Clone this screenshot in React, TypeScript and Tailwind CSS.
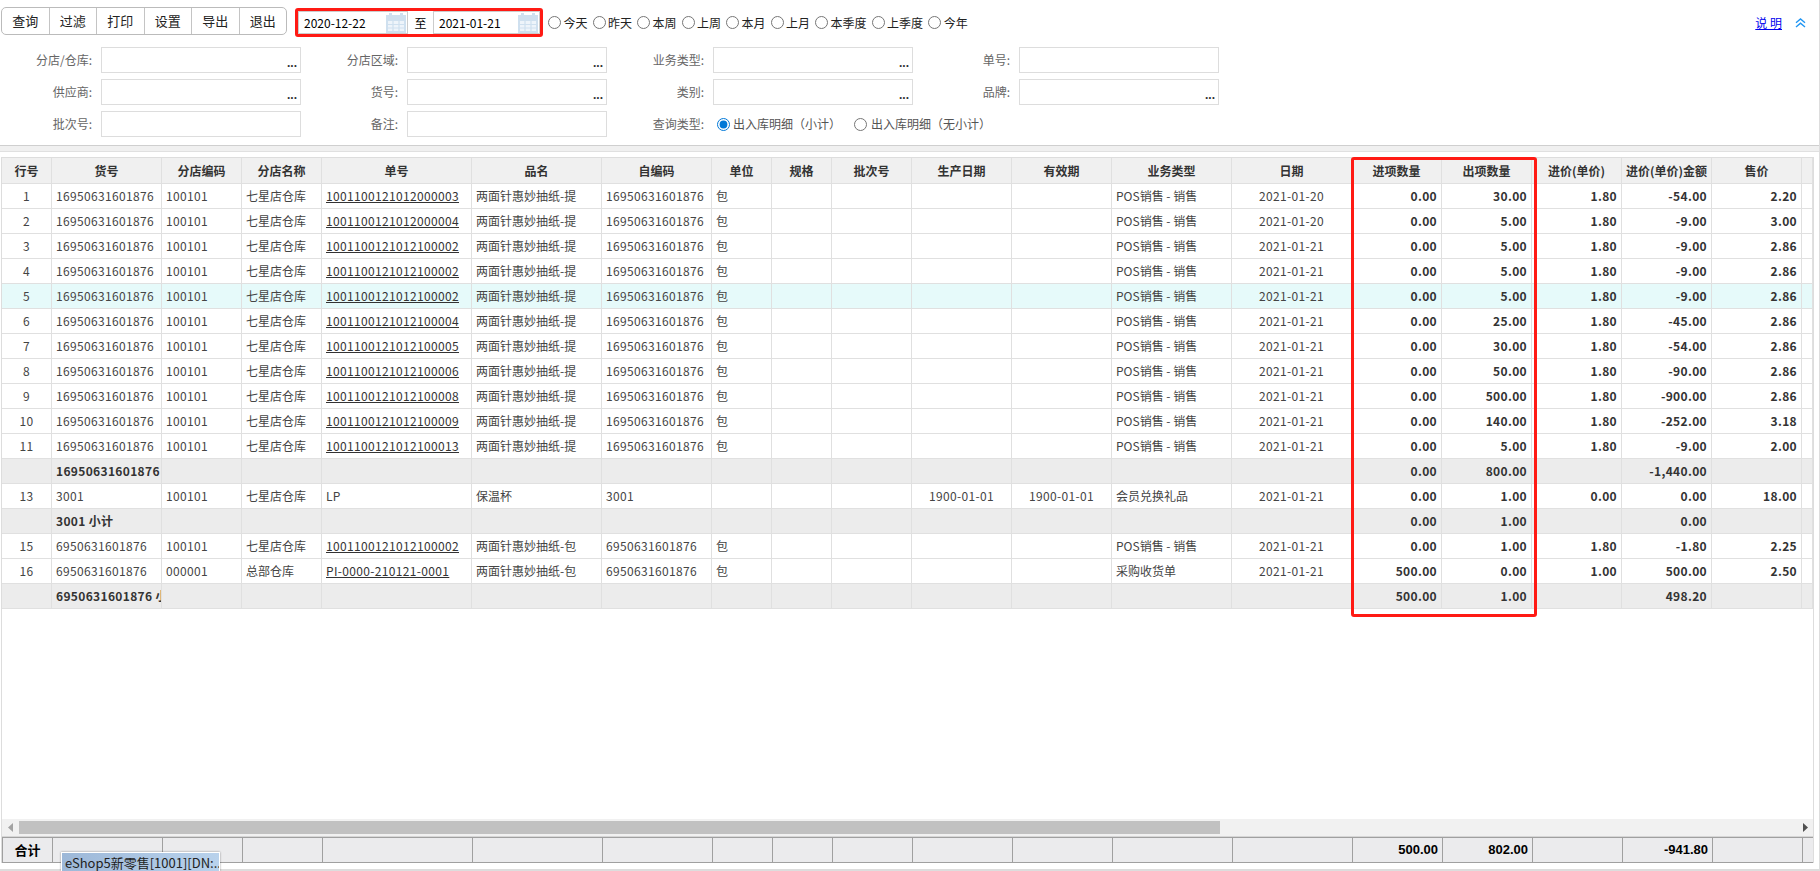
import React from "react";

const colWidths = [
    "w-[50px]", "w-[110px]", "w-[80px]", "w-[80px]", "w-[150px]", "w-[130px]", "w-[110px]", "w-[60px]", "w-[60px]", "w-[80px]",
    "w-[100px]", "w-[100px]", "w-[120px]", "w-[120px]", "w-[90px]", "w-[90px]", "w-[90px]", "w-[90px]", "w-[90px]", "w-[11px]",
];

const headers = ["行号", "货号", "分店编码", "分店名称", "单号", "品名", "自编码", "单位", "规格", "批次号", "生产日期", "有效期", "业务类型", "日期", "进项数量", "出项数量", "进价(单价)", "进价(单价)金额", "售价", ""];

interface Row {
    no?: string;
    code: string;
    shopCode?: string;
    shop?: string;
    bill?: string;
    name?: string;
    self?: string;
    unit?: string;
    made?: string;
    expire?: string;
    biz?: string;
    date?: string;
    inQty: string;
    outQty: string;
    price?: string;
    amount: string;
    sale?: string;
    subtotal?: boolean;
    active?: boolean;
}

const paper = (no: string, bill: string, date: string, outQty: string, amount: string, sale: string, active?: boolean): Row => ({
    no, code: "16950631601876", shopCode: "100101", shop: "七星店仓库", bill, name: "两面针惠妙抽纸-提", self: "16950631601876", unit: "包",
    biz: "POS销售 - 销售", date, inQty: "0.00", outQty, price: "1.80", amount, sale, active,
});

const rows: Row[] = [
    paper("1", "1001100121012000003", "2021-01-20", "30.00", "-54.00", "2.20"),
    paper("2", "1001100121012000004", "2021-01-20", "5.00", "-9.00", "3.00"),
    paper("3", "1001100121012100002", "2021-01-21", "5.00", "-9.00", "2.86"),
    paper("4", "1001100121012100002", "2021-01-21", "5.00", "-9.00", "2.86"),
    paper("5", "1001100121012100002", "2021-01-21", "5.00", "-9.00", "2.86", true),
    paper("6", "1001100121012100004", "2021-01-21", "25.00", "-45.00", "2.86"),
    paper("7", "1001100121012100005", "2021-01-21", "30.00", "-54.00", "2.86"),
    paper("8", "1001100121012100006", "2021-01-21", "50.00", "-90.00", "2.86"),
    paper("9", "1001100121012100008", "2021-01-21", "500.00", "-900.00", "2.86"),
    paper("10", "1001100121012100009", "2021-01-21", "140.00", "-252.00", "3.18"),
    paper("11", "1001100121012100013", "2021-01-21", "5.00", "-9.00", "2.00"),
    { code: "16950631601876 小计", inQty: "0.00", outQty: "800.00", amount: "-1,440.00", subtotal: true },
    { no: "13", code: "3001", shopCode: "100101", shop: "七星店仓库", bill: "LP", name: "保温杯", self: "3001", made: "1900-01-01", expire: "1900-01-01", biz: "会员兑换礼品", date: "2021-01-21", inQty: "0.00", outQty: "1.00", price: "0.00", amount: "0.00", sale: "18.00" },
    { code: "3001 小计", inQty: "0.00", outQty: "1.00", amount: "0.00", subtotal: true },
    { no: "15", code: "6950631601876", shopCode: "100101", shop: "七星店仓库", bill: "1001100121012100002", name: "两面针惠妙抽纸-包", self: "6950631601876", unit: "包", biz: "POS销售 - 销售", date: "2021-01-21", inQty: "0.00", outQty: "1.00", price: "1.80", amount: "-1.80", sale: "2.25" },
    { no: "16", code: "6950631601876", shopCode: "000001", shop: "总部仓库", bill: "PI-0000-210121-0001", name: "两面针惠妙抽纸-包", self: "6950631601876", unit: "包", biz: "采购收货单", date: "2021-01-21", inQty: "500.00", outQty: "0.00", price: "1.00", amount: "500.00", sale: "2.50" },
    { code: "6950631601876 小计", inQty: "500.00", outQty: "1.00", amount: "498.20", subtotal: true },
];

const cell = "border-r border-b border-[#e0e0e0] px-[4px] overflow-hidden whitespace-nowrap";
const num = "tracking-[0.34px]";
const right = "text-right tracking-[0.34px]";

const CalendarIcon = () => (
    <svg width="20" height="20" viewBox="0 0 20 20" className="shrink-0">
        <rect x="0" y="2" width="20" height="18" fill="#cfe0ef" />
        <rect x="3" y="0" width="3" height="4" fill="#cfe0ef" />
        <rect x="14" y="0" width="3" height="4" fill="#cfe0ef" />
        <rect x="2" y="8" width="16" height="10" fill="#eef4fa" />
        <path d="M7 8v10M13 8v10M2 11.5h16M2 15h16" stroke="#cfe0ef" strokeWidth="1.2" />
    </svg>
);

const DateBox = ({ value, className }: { value: string; className: string }) => (
    <div className={`flex h-full items-center justify-between border border-[#cccccc] bg-white pl-[5px] pr-[1px] text-black ${className}`}>
        <span>{value}</span>
        <CalendarIcon />
    </div>
);

const Radio = ({ label }: { label: string }) => (
    <label className="flex items-center gap-[2.5px]">
        <input type="radio" name="range" className="m-0 h-[13px] w-[13px]" />
        <span>{label}</span>
    </label>
);

const Field = ({ label, dots, wide }: { label: string; dots?: boolean; wide?: boolean }) => (
    <div className="flex items-center">
        <span className="w-[92px] text-right text-[#666666]">{label}</span>
        <div className={`ml-[9px] flex h-[26px] items-end justify-end border border-[#dddddd] bg-white pr-[3px] ${wide ? "w-[201px]" : "w-[200px]"}`}>
            {dots && <span className="font-['Liberation_Sans',sans-serif] text-[12px] font-bold leading-[18px] text-[#333333]">...</span>}
        </div>
    </div>
);

export default function App() {
    return (
        <div className="relative flex h-[871px] w-[1820px] flex-col overflow-hidden border-r border-[#dddddd] bg-white font-['Noto_Sans_CJK_SC',sans-serif] text-[12px] text-[#444444]">
            {/* top panel */}
            <div className="h-[145px] shrink-0">
                <div className="flex h-[47px] items-start pl-[1px] pt-[7px]">
                    <div className="flex h-[28px] w-[286px] rounded-[5px] border border-[#bbbbbb] text-[13px] text-[#222222]">
                        {["查询", "过滤", "打印", "设置", "导出", "退出"].map((b, i) => (
                            <button key={b} className={`flex flex-1 items-center justify-center ${i < 5 ? "border-r border-[#c4c4c4]" : ""}`}>{b}</button>
                        ))}
                    </div>
                    <div className="ml-[8px] mt-[1px] flex h-[29px] w-[248px] items-center rounded-[3px] border-[3px] border-[#ff1a14] bg-white">
                        <DateBox value="2020-12-22" className="w-[110px]" />
                        <span className="w-[25px] text-center text-black">至</span>
                        <DateBox value="2021-01-21" className="w-[107px]" />
                    </div>
                    <div className="ml-[5px] mt-[1px] flex h-[29px] items-center gap-[5px] text-[#222222]">
                        {["今天", "昨天", "本周", "上周", "本月", "上月", "本季度", "上季度", "今年"].map((r) => <Radio key={r} label={r} />)}
                    </div>
                    <div className="ml-auto mr-[13px] mt-[1px] flex h-[29px] items-center gap-[13px]">
                        <a href="#" className="text-[#0000ee] underline">说 明</a>
                        <svg width="11" height="10" viewBox="0 0 11 10" fill="none" stroke="#2196f3" strokeWidth="1.4">
                            <path d="M1 4.8 5.5 1 10 4.8M1 9 5.5 5.2 10 9" />
                        </svg>
                    </div>
                </div>
                <div className="grid grid-cols-[repeat(4,306px)] gap-y-[6px]">
                    <Field label="分店/仓库:" dots />
                    <Field label="分店区域:" dots />
                    <Field label="业务类型:" dots />
                    <Field label="单号:" />
                    <Field label="供应商:" dots />
                    <Field label="货号:" dots />
                    <Field label="类别:" dots />
                    <Field label="品牌:" dots />
                    <Field label="批次号:" />
                    <Field label="备注:" />
                    <div className="col-span-2 flex items-center">
                        <span className="w-[92px] text-right text-[#666666]">查询类型:</span>
                        <div className="ml-[13px] flex items-center gap-[13px] text-[#555555]">
                            <label className="flex items-center gap-[3px]">
                                <input type="radio" name="kind" defaultChecked className="m-0 h-[13px] w-[13px] accent-[#0078d7]" />
                                <span>出入库明细（小计）</span>
                            </label>
                            <label className="flex items-center gap-[4px]">
                                <input type="radio" name="kind" className="m-0 h-[13px] w-[13px]" />
                                <span>出入库明细（无小计）</span>
                            </label>
                        </div>
                    </div>
                </div>
            </div>

            {/* splitter */}
            <div className="h-[7px] shrink-0 border-y border-t-[#cfcfcf] border-b-[#e0e0e0] bg-[#f0f0f0]" />

            {/* grid frame */}
            <div className="ml-px mt-[5px] flex h-[706px] w-[1813px] shrink-0 flex-col border-x border-t border-[#dddddd]">
                <div className="min-h-0 flex-1 overflow-hidden">
                    <table className="w-[1811px] table-fixed border-separate border-spacing-0">
                        <colgroup>
                            {colWidths.map((w, i) => <col key={i} className={w} />)}
                        </colgroup>
                        <thead>
                            <tr className="h-[26px] bg-[#f0f0f0] font-semibold text-[#333333]">
                                {headers.map((h, i) => <th key={i} className={`${cell} text-center font-semibold`}>{h}</th>)}
                            </tr>
                        </thead>
                        <tbody>
                            {rows.map((r, i) => (
                                <tr key={i} className={`h-[25px] ${r.subtotal ? "bg-[#ececec]" : r.active ? "bg-[#e6fafa]" : ""}`}>
                                    <td className={`${cell} text-center ${num}`}>{r.no}</td>
                                    <td className={`${cell} ${num} ${r.subtotal ? "font-bold text-[#333333]" : ""}`}>{r.code}</td>
                                    <td className={`${cell} ${num}`}>{r.shopCode}</td>
                                    <td className={cell}>{r.shop}</td>
                                    <td className={`${cell} ${num} ${r.bill && r.bill !== "LP" ? "text-[#333333] underline" : ""}`}>{r.bill}</td>
                                    <td className={cell}>{r.name}</td>
                                    <td className={`${cell} ${num}`}>{r.self}</td>
                                    <td className={cell}>{r.unit}</td>
                                    <td className={cell}></td>
                                    <td className={cell}></td>
                                    <td className={`${cell} text-center ${num}`}>{r.made}</td>
                                    <td className={`${cell} text-center ${num}`}>{r.expire}</td>
                                    <td className={cell}>{r.biz}</td>
                                    <td className={`${cell} text-center ${num}`}>{r.date}</td>
                                    <td className={`${cell} ${right} font-bold text-[#333333]`}>{r.inQty}</td>
                                    <td className={`${cell} ${right} font-bold text-[#333333]`}>{r.outQty}</td>
                                    <td className={`${cell} ${right} font-semibold text-[#333333]`}>{r.price}</td>
                                    <td className={`${cell} ${right} font-semibold text-[#333333]`}>{r.amount}</td>
                                    <td className={`${cell} ${right} font-bold text-[#333333]`}>{r.sale}</td>
                                    <td className={cell}></td>
                                </tr>
                            ))}
                        </tbody>
                    </table>
                </div>

                {/* scrollbar */}
                <div className="flex h-[18px] shrink-0 items-center border-b border-[#d6d6d6] bg-[#f1f1f1]">
                    <div className="flex w-[17px] justify-center">
                        <svg width="5" height="9" viewBox="0 0 5 9"><path d="M5 0v9L0 4.5z" fill="#a3a3a3" /></svg>
                    </div>
                    <div className="h-[13px] w-[1201px] bg-[#c1c1c1]" />
                    <div className="flex flex-1 justify-end pr-[5px]">
                        <svg width="5" height="9" viewBox="0 0 5 9"><path d="M0 0v9l5-4.5z" fill="#505050" /></svg>
                    </div>
                </div>

                {/* totals */}
                <div className="h-[26px] shrink-0 border-y border-l border-[#a0a0a0] bg-[#ebebed] font-['Liberation_Sans',sans-serif] text-[13px] font-bold text-black">
                    <table className="w-[1810px] table-fixed border-separate border-spacing-0">
                        <colgroup>
                            {colWidths.map((w, i) => <col key={i} className={w} />)}
                        </colgroup>
                        <tbody>
                            <tr className="h-[24px]">
                                {headers.map((_, i) => {
                                    const totals: Record<number, string> = { 14: "500.00", 15: "802.00", 17: "-941.80" };
                                    return (
                                        <td key={i} className={`whitespace-nowrap px-[4px] ${i < 19 ? "border-r border-[#a0a0a0]" : ""} ${i === 0 ? "text-center font-['Noto_Sans_CJK_SC',sans-serif]" : "text-right"}`}>
                                            {i === 0 ? "合计" : totals[i]}
                                        </td>
                                    );
                                })}
                            </tr>
                        </tbody>
                    </table>
                </div>
            </div>

            <div className="mt-[6px] h-[2px] shrink-0 bg-[#dddddd]" />

            {/* red highlight drawn over the quantity columns */}
            <div className="pointer-events-none absolute left-[1351px] top-[157px] h-[460px] w-[186px] rounded-[3px] border-[3px] border-[#ff1a14]" />

            {/* taskbar hover title */}
            <div className="absolute left-[61px] top-[852px] h-[19px] w-[159px] overflow-hidden whitespace-nowrap border-x border-t border-white bg-gradient-to-r from-[#9db8d8] to-[#b9d2ec] pl-[3px] text-[13px] leading-[20px] text-[#222222] shadow-[0_0_2px_rgba(0,0,0,0.4)]">
                eShop5新零售[1001][DN:...
            </div>
        </div>
    );
}
